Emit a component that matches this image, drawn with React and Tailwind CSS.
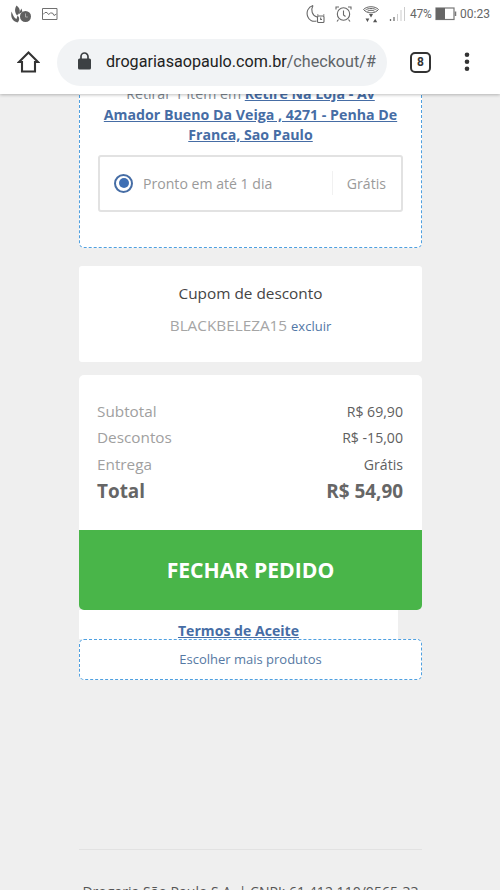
const totals = [
  { label: "Subtotal", value: "R$ 69,90" },
  { label: "Descontos", value: "R$ -15,00" },
  { label: "Entrega", value: "Grátis" },
];

function StatusBar() {
  return (
    <div className="flex h-7 items-center justify-between pl-[10px] pr-[10px] text-[#666]">
      <div className="flex items-center gap-[10px]">
        <svg width="22" height="18" viewBox="0 0 22 18" fill="#606060">
          <path d="M6.500 .5 C9 2.500 10.500 5 9.500 7.500 L7 10.500 C4.500 7.500 4.500 3.500 6.500 .5Z" />
          <path d="M1.500 6.500 C.5 12 2 16 7.500 17.500 C10 15.500 9.500 12 7.500 10.500 L6.500 14 C4 13 3 10 1.500 6.500Z" />
          <path d="M8 9.500 L11.500 3.500 L12.500 7Z" />
          <circle cx="15.500" cy="11.500" r="5.500" />
          <path d="M15.500 8.500v3.500h2.300" fill="none" stroke="#aaa" strokeWidth="1" />
        </svg>
        <svg width="16" height="14" viewBox="0 0 16 14" fill="none" stroke="#707070" strokeWidth="1">
          <path d="M.5 1.500h14.500v11H.5z" />
          <path d="M1 7.500 3 5.500 5 5.500 6.500 7.500 8.500 6 10.500 6 12 8.500 14.500 7" />
        </svg>
      </div>
      <div className="flex items-center">
        <svg width="20" height="20" viewBox="0 0 20 20" fill="none" stroke="#686868" strokeWidth="1.100">
          <path d="M7 1.500 C2 3 0 8 1.700 12.500 C3 16 6.500 18 10.500 17" />
          <path d="M7 1.500 C4.500 6 6 11.500 11 13" />
          <rect x="11.500" y="12" width="6.500" height="6.500" rx="1" />
          <path d="M11 11h1.500M17 11h1.500M14.700 13.500v2h1.300" />
        </svg>
        <svg className="ml-[9px]" width="17" height="18" viewBox="0 0 17 18" fill="none" stroke="#686868" strokeWidth="1.100">
          <circle cx="8.500" cy="9" r="6.200" />
          <path d="M8.500 5.500V10l2 1.500M1 4.500V2h3M16 4.500V2h-3M3.500 14.500 2 16.500M13.500 14.500l1.500 2" />
        </svg>
        <svg className="ml-[10px]" width="18" height="18" viewBox="0 0 18 18" fill="none" stroke="#686868" strokeWidth="1">
          <path d="M1.500 4.500 C5 .8 13 .8 16.500 4.500 C13 9 5 9 1.500 4.500Z" />
          <path d="M3.500 5 C6 3 12 3 14.500 5M5.500 6.200 C7.500 5 10.500 5 12.500 6.200" />
          <path d="M7 9h4L9 12.500z" fill="#555" stroke="none" />
          <path d="M3.500 13.500h3.800l-1.800 3.500zM11 17.300h4.200L13.200 13.800z" fill="#555" stroke="none" />
        </svg>
        <svg className="ml-[9px]" width="17" height="16" viewBox="0 0 17 16" stroke="#cccccc">
          <path d="M1.500 13v2M5 11v4" stroke="#707070" strokeWidth="1.300" />
          <path d="M8.500 8v7M12 4v11M15.500 1v14" strokeWidth="1" />
        </svg>
        <span className="ml-[4px] w-[23px] whitespace-nowrap font-[Roboto] text-[12px] tracking-[-0.2px]">47%</span>
        <svg className="ml-[2px]" width="22" height="14" viewBox="0 0 22 14">
          <rect x="1" y="1" width="18" height="11.500" fill="#fff" stroke="#777" strokeWidth="1.200" />
          <path d="M1 1h9v11.500H1z" fill="#666" />
          <path d="M20.500 4.500v4.500" stroke="#777" strokeWidth="1.500" />
        </svg>
        <span className="ml-[3px] w-[30px] whitespace-nowrap font-[Roboto] text-[12px]">00:23</span>
      </div>
    </div>
  );
}

function BrowserBar() {
  return (
    <div className="flex h-[66px] items-center pl-[17px] pt-[2px]">
      <svg width="23" height="24" viewBox="0 0 23 24" fill="none" stroke="#333" strokeWidth="2.100">
        <path d="M2 12 11.500 2.500 21 12h-3v9.500H5V12z" />
      </svg>
      <div className="ml-[17px] flex h-[47px] w-[330px] items-center rounded-full bg-[#f1f3f5] pl-[20px]">
        <svg className="-mt-0.5" width="15" height="18" viewBox="0 0 15 18">
          <path d="M4 7V4.500a3.500 3.500 0 0 1 7 0V7" fill="none" stroke="#3c4043" strokeWidth="1.700" />
          <rect x="1" y="6.500" width="13" height="11" rx="1.500" fill="#3c4043" />
        </svg>
        <p className="ml-[14px] whitespace-nowrap pt-px font-[Roboto] text-[16.15px] text-[#222]">
          drogariasaopaulo.com.br<span className="text-[#606468]">/checkout/#</span>
        </p>
      </div>
      <div className="ml-[23px] flex h-[21px] w-[21px] items-center justify-center rounded-[5px] border-2 border-[#333] font-[Roboto] text-[12px] font-bold text-[#333]">
        8
      </div>
      <svg className="ml-[33px]" width="6" height="20" viewBox="0 0 6 20" fill="#333">
        <circle cx="3" cy="2.700" r="2.300" />
        <circle cx="3" cy="9.700" r="2.300" />
        <circle cx="3" cy="16.700" r="2.300" />
      </svg>
    </div>
  );
}

export default function App() {
  return (
    <div className="flex h-[890px] w-[500px] flex-col overflow-hidden bg-[#efefef] font-['Open_Sans',sans-serif]">
      <header className="z-10 h-[94px] shrink-0 bg-white shadow-[0_1px_3px_rgba(0,0,0,0.25)]">
        <StatusBar />
        <BrowserBar />
      </header>

      <main className="ml-[79px] flex w-[343px] flex-col">
        <section className="-mt-[19px] h-[173px] rounded-[5px] border border-dashed border-[#4fa0e0] bg-white px-[18px] pt-[8px]">
          <p className="whitespace-nowrap text-center text-[14.2px] leading-[20.6px] text-[#7d8790]">
            Retirar 1 item em{" "}
            <span className="font-bold text-[#466da5] underline">
              Retire Na Loja - Av
              <br />
              Amador Bueno Da Veiga , 4271 - Penha De
              <br />
              Franca, Sao Paulo
            </span>
          </p>
          <div className="mt-[9px] flex h-[57px] w-[305px] items-center rounded-[3px] border-2 border-[#e2e2e2] pl-[14px] pr-[15px] text-[14.1px] text-[#9a9a9a]">
            <span className="flex h-[19px] w-[19px] items-center justify-center rounded-full border-2 border-[#466da5]">
              <span className="h-[10px] w-[10px] rounded-full bg-[#3f6fb4]" />
            </span>
            <span className="ml-[10px]">Pronto em até 1 dia</span>
            <span className="ml-auto flex h-6 items-center border-l border-[#f1f1f1] pl-[14px]">Grátis</span>
          </div>
        </section>

        <section className="mt-[18px] h-[96px] rounded-[3px] bg-white pt-[17px] text-center">
          <h2 className="text-[15.35px] leading-[21px] text-[#444]">Cupom de desconto</h2>
          <p className="mt-[10px] text-[15.3px] leading-[22px] text-[#a5a5a5]">
            BLACKBELEZA15 <a className="text-[13px] text-[#5177a6]">excluir</a>
          </p>
        </section>

        <section className="mt-[13px] h-[155px] rounded-t-[5px] bg-white pl-[18px] pr-[19px] pt-[23px]">
          {totals.map((row) => (
            <div key={row.label} className="flex h-[26.5px] items-center justify-between text-[15.3px]">
              <span className="text-[#a0a0a0]">{row.label}</span>
              <span className="text-[14.1px] text-[#606060]">{row.value}</span>
            </div>
          ))}
          <div className="flex h-[27px] items-center justify-between text-[18.9px] font-bold text-[#666]">
            <span>Total</span>
            <span>{"R$ 54,90"}</span>
          </div>
        </section>
        <button className="h-[80px] rounded-b-[5px] bg-[#49b549] text-[21.2px] font-bold text-white">FECHAR PEDIDO</button>

        <div className="h-[29px] w-[319px] bg-white pt-[10px] text-center text-[14.1px] leading-[21px]">
          <a className="font-bold text-[#466da5] underline">Termos de Aceite</a>
        </div>
        <a className="flex h-[41px] items-center justify-center rounded-[5px] border border-dashed border-[#4fa0e0] bg-white text-[13px] text-[#5679a3]">
          Escolher mais produtos
        </a>

        <footer className="mt-[169px] border-t border-[#e2e2e2] pt-[32px] text-center text-[14.05px] leading-[20px] text-[#555]">
          <p className="whitespace-nowrap">Drogaria São Paulo S.A. | CNPJ: 61.412.110/0565-33</p>
        </footer>
      </main>
    </div>
  );
}
